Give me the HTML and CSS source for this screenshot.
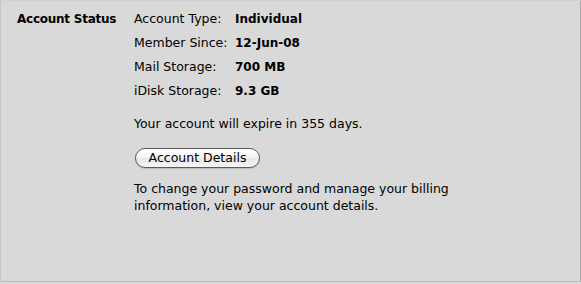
FILE: index.html
```html
<!DOCTYPE html>
<html>
<head>
<meta charset="utf-8">
<link rel="stylesheet" href="styles.css">
</head>
<body>
<div class="panel">
  <div class="section">
    <div class="section-title">Account Status</div>
    <div class="section-body">
      <div class="facts">
        <div class="label">Account Type:</div><div class="value">Individual</div>
        <div class="label">Member Since:</div><div class="value">12-Jun-08</div>
        <div class="label">Mail Storage:</div><div class="value">700 MB</div>
        <div class="label">iDisk Storage:</div><div class="value">9.3 GB</div>
      </div>
      <p class="expire">Your account will expire in 355 days.</p>
      <button class="pill">Account Details</button>
      <p class="note">To change your password and manage your billing information, view your account details.</p>
    </div>
  </div>
</div>
</body>
</html>
```

FILE: styles.css
```css
html, body {
  margin: 0;
  padding: 0;
  background: #d9d9d9;
}
body {
  font-family: "DejaVu Sans", "Liberation Sans", sans-serif;
  font-size: 12.5px;
  color: #000;
  width: 581px;
  height: 284px;
  overflow: hidden;
}
.panel {
  box-sizing: border-box;
  width: 581px;
  height: 282px;
  border-top: 1px solid #d2d2d2;
  border-left: 1px solid #c4c4c4;
  border-right: 1px solid #a9a9a9;
  border-bottom: 1px solid #bdbdbd;
  background: #d9d9d9;
  padding: 10px 0 0 16px;
}
.section {
  display: flex;
}
.section-title {
  width: 117px;
  font-size: 12px;
  font-weight: bold;
  letter-spacing: -0.25px;
  line-height: 16px;
}
.section-body {
  width: 360px;
}
.facts {
  display: grid;
  grid-template-columns: 101px auto;
  grid-auto-rows: 16px;
  row-gap: 8px;
  line-height: 16px;
}
.value {
  font-size: 12px;
  font-weight: bold;
}
.expire {
  margin: 17px 0 0;
  line-height: 16px;
}
.pill {
  display: block;
  margin: 16px 0 0 1px;
  height: 20px;
  width: 125px;
  padding: 0;
  border: 1px solid #5a5a5a;
  border-radius: 10px;
  background: linear-gradient(#ffffff, #f4f4f4 50%, #e6e6e6 51%, #f6f6f6);
  box-shadow: 0 1px 1px rgba(0,0,0,0.15);
  font-family: inherit;
  font-size: 12.5px;
  color: #000;
  line-height: 18px;
}
.note {
  margin: 12px 0 0;
  line-height: 17px;
}
```
